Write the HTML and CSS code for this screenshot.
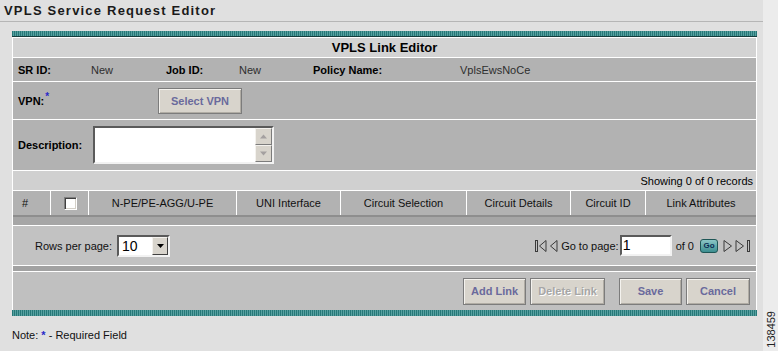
FILE: index.html
```html
<!DOCTYPE html>
<html>
<head>
<meta charset="utf-8">
<title>VPLS Service Request Editor</title>
<link rel="stylesheet" href="styles.css">
</head>
<body>
<div class="screen">
  <main class="main">
    <h1 class="title">VPLS Service Request Editor</h1>
    <section class="panel">
      <div class="teal teal-top"></div>
      <div class="frame">
        <div class="row head">VPLS Link Editor</div>
        <div class="row info">
          <span class="lbl">SR ID:</span><span class="val">New</span>
          <span class="lbl">Job ID:</span><span class="val">New</span>
          <span class="lbl">Policy Name:</span><span class="val">VplsEwsNoCe</span>
        </div>
        <div class="row vpn">
          <span class="lbl vpn-lbl">VPN:<sup class="req">*</sup></span>
          <button class="btn btn-select">Select VPN</button>
        </div>
        <div class="row desc">
          <span class="lbl desc-lbl">Description:</span>
          <div class="textarea">
            <div class="ta-body"></div>
            <div class="ta-scroll">
              <span class="sb"><svg width="9" height="5" viewBox="0 0 9 5"><path d="M4.5 0.5 L8 4.5 L1 4.5 Z" fill="#a4a0a0"/></svg></span>
              <span class="sb"><svg width="9" height="5" viewBox="0 0 9 5"><path d="M1 0.5 L8 0.5 L4.5 4.5 Z" fill="#a4a0a0"/></svg></span>
            </div>
          </div>
        </div>
        <div class="row showing">Showing 0 of 0 records</div>
        <div class="row thead">
          <div class="th th-num">#</div>
          <div class="th"><span class="checkbox"></span></div>
          <div class="th">N-PE/PE-AGG/U-PE</div>
          <div class="th">UNI Interface</div>
          <div class="th">Circuit Selection</div>
          <div class="th">Circuit Details</div>
          <div class="th">Circuit ID</div>
          <div class="th">Link Attributes</div>
        </div>
        <div class="band band-1"></div>
        <div class="row pager">
          <span class="rpp">Rows per page:</span>
          <div class="select">
            <span class="select-val">10</span>
            <span class="select-btn"><svg width="7" height="4" viewBox="0 0 7 4"><path d="M0 0 L7 0 L3.5 4 Z" fill="#000"/></svg></span>
          </div>
          <div class="nav">
            <svg class="ico ico-first" width="12" height="14" viewBox="0 0 12 14"><rect x="0.5" y="1.5" width="2" height="11" fill="none" stroke="#3a3a3a"/><path d="M11 1.5 L4.5 7 L11 12.5 Z" fill="none" stroke="#3a3a3a"/></svg>
            <svg class="ico ico-prev" width="9" height="14" viewBox="0 0 9 14"><path d="M8 1.5 L1.5 7 L8 12.5 Z" fill="none" stroke="#3a3a3a"/></svg>
            <span class="goto">Go to page:</span>
            <span class="page-input">1</span>
            <span class="of">of 0</span>
            <button class="go">Go</button>
            <svg class="ico ico-next" width="10" height="14" viewBox="0 0 10 14"><path d="M1 1.5 L8.5 7 L1 12.5 Z" fill="none" stroke="#3a3a3a"/></svg>
            <svg class="ico ico-last" width="17" height="14" viewBox="0 0 17 14"><path d="M1 1.5 L8.5 7 L1 12.5 Z" fill="none" stroke="#3a3a3a"/><rect x="12.5" y="1.5" width="2" height="11" fill="none" stroke="#3a3a3a"/></svg>
          </div>
        </div>
        <div class="band band-2"></div>
        <div class="row actions">
          <button class="btn btn-add">Add Link</button>
          <button class="btn btn-delete" disabled>Delete Link</button>
          <button class="btn btn-save">Save</button>
          <button class="btn btn-cancel">Cancel</button>
        </div>
      </div>
      <div class="teal teal-bottom"></div>
    </section>
    <p class="note">Note: <span class="req">*</span> - Required Field</p>
  </main>
  <aside class="strip"><span class="figno">138459</span></aside>
</div>
</body>
</html>
```

FILE: styles.css
```css
* { box-sizing: border-box; }

body {
  margin: 0;
  background: #ececec;
  font-family: "Liberation Sans", Arial, sans-serif;
  font-size: 11px;
  color: #000;
}

.screen {
  display: flex;
  width: 778px;
  height: 351px;
  overflow: hidden;
}

.main {
  width: 763px;
  flex: none;
  background: #e0e0e0;
}

.title {
  margin: 0;
  height: 22px;
  line-height: 21px;
  border-bottom: 1px solid #b6b6b6;
  padding-left: 4px;
  font-size: 13px;
  font-weight: bold;
  letter-spacing: 1.2px;
  color: #1a1a1a;
}

.panel {
  margin: 9px 0 0 12px;
  width: 745px;
}

.teal {
  background: repeating-linear-gradient(90deg, #277878 0 1px, #57a0a0 1px 2px);
}

.teal-top {
  height: 6px;
  border-bottom: 1px solid #163c3c;
}

.teal-bottom {
  height: 6px;
}

.frame {
  border-left: 1px solid #fff;
  border-right: 1px solid #fff;
}

.row {
  border-top: 1px solid #fff;
  display: flex;
  align-items: center;
}

.head {
  height: 20px;
  background: #d3d3d3;
  justify-content: center;
  font-weight: bold;
  font-size: 13px;
}

.lbl {
  font-weight: bold;
  color: #000;
}

.val {
  color: #2e2e2e;
}

.info {
  height: 24px;
  display: grid;
  grid-template-columns: 73px 75px 73px 74px 147px 1fr;
  background: #b2b2b2;
}

.info > span {
  padding-left: 5px;
}

.vpn {
  height: 38px;
  background: #b2b2b2;
  padding-left: 5px;
}

.vpn-lbl {
  width: 140px;
}

.req {
  color: #2a2ac8;
  font-weight: bold;
}

sup.req {
  font-size: 10px;
  vertical-align: 5px;
  line-height: 0;
  margin-left: 1px;
}

.btn {
  font-family: "Liberation Sans", Arial, sans-serif;
  font-size: 11px;
  font-weight: bold;
  color: #6a6a9c;
  background: #d8d4cc;
  border: 1px solid #7c7c7c;
  box-shadow: inset 1px 1px 0 #f4f2ee, inset -1px -1px 0 #b0aca4;
  height: 27px;
  padding: 0;
  cursor: default;
}

.btn-select {
  width: 84px;
  height: 26px;
}

.desc {
  height: 51px;
  background: #b2b2b2;
  padding-left: 5px;
}

.desc-lbl {
  width: 75px;
}

.textarea {
  width: 181px;
  height: 38px;
  display: flex;
  border: 2px solid;
  border-color: #5a5a5a #f2f2f2 #f2f2f2 #5a5a5a;
  background: #fff;
}

.ta-body {
  flex: 1;
}

.ta-scroll {
  width: 17px;
  display: flex;
  flex-direction: column;
}

.sb {
  height: 17px;
  display: flex;
  align-items: center;
  justify-content: center;
  background: #d8d4cc;
  border: 1px solid;
  border-color: #f4f2ee #7c7c7c #7c7c7c #f4f2ee;
}

.showing {
  height: 20px;
  background: #d0d0d0;
  justify-content: flex-end;
  padding-right: 3px;
}

.thead {
  height: 25px;
  display: grid;
  grid-template-columns: 37px 38px 148px 104px 126px 104px 75px 1fr;
  background: #b2b2b2;
  align-items: stretch;
}

.th {
  border-left: 1px solid #fff;
  display: flex;
  align-items: center;
  justify-content: center;
  color: #111;
}

.th-num {
  border-left: none;
  justify-content: flex-start;
  padding-left: 9px;
}

.checkbox {
  display: block;
  width: 13px;
  height: 13px;
  background: #fff;
  border: 1px solid;
  border-color: #808080 #fff #fff #808080;
  box-shadow: inset 1px 1px 0 #404040, inset -1px -1px 0 #d4d0c8;
  margin-left: 1px;
}

.band-1 {
  height: 10px;
  border-top: 2px solid #8e8e8e;
  background: #a6a6a6;
}

.pager {
  height: 40px;
  background: #c2c2c2;
  padding-left: 22px;
  padding-right: 4px;
}

.rpp {
  color: #111;
}

.select {
  margin-left: 5px;
  width: 53px;
  height: 22px;
  display: flex;
  border: 2px solid;
  border-color: #5a5a5a #f2f2f2 #f2f2f2 #5a5a5a;
  background: #fff;
}

.select-val {
  flex: 1;
  font-size: 14px;
  line-height: 18px;
  padding-left: 3px;
}

.select-btn {
  width: 16px;
  display: flex;
  align-items: center;
  justify-content: center;
  background: #d8d4cc;
  border: 1px solid;
  border-color: #f4f2ee #404040 #404040 #f4f2ee;
}

.nav {
  margin-left: auto;
  display: flex;
  align-items: center;
}

.ico {
  display: block;
}

.ico-prev {
  margin-left: 2px;
}

.goto {
  margin-left: 3px;
  color: #111;
}

.page-input {
  margin-left: 1px;
  width: 52px;
  height: 21px;
  border: 2px solid;
  border-color: #5a5a5a #f2f2f2 #f2f2f2 #5a5a5a;
  background: #fff;
  font-size: 14px;
  line-height: 17px;
  padding-left: 1px;
}

.of {
  margin-left: 4px;
  color: #111;
}

.go {
  margin-left: 6px;
  width: 18px;
  height: 14px;
  padding: 0;
  border: 1px solid #1e5656;
  border-radius: 3px;
  background: linear-gradient(#8cc6c6, #3c8e90);
  font-family: "Liberation Sans", Arial, sans-serif;
  font-size: 8px;
  font-weight: bold;
  color: #0c2c54;
  line-height: 12px;
}

.ico-next {
  margin-left: 5px;
}

.ico-last {
  margin-left: 2px;
}

.band-2 {
  height: 6px;
  border-top: 1px solid #fff;
  background: #a2a2a2;
}

.actions {
  height: 39px;
  background: #c0c0c0;
  justify-content: flex-end;
  padding-right: 6px;
}

.btn-add {
  width: 63px;
}

.btn-delete {
  width: 75px;
  margin-left: 4px;
  color: #a6a6a6;
  text-shadow: 1px 1px 0 #fff;
}

.btn-save {
  width: 63px;
  margin-left: 14px;
}

.btn-cancel {
  width: 64px;
  margin-left: 4px;
}

.note {
  margin: 13px 0 0 12px;
  line-height: 13px;
  color: #111;
}

.strip {
  flex: 1;
  display: flex;
  flex-direction: column;
  justify-content: flex-end;
  align-items: flex-end;
  padding-bottom: 3px;
}

.figno {
  writing-mode: vertical-rl;
  transform: rotate(180deg);
  font-size: 11px;
  line-height: 12px;
  color: #222;
  margin-right: 1px;
}
```
